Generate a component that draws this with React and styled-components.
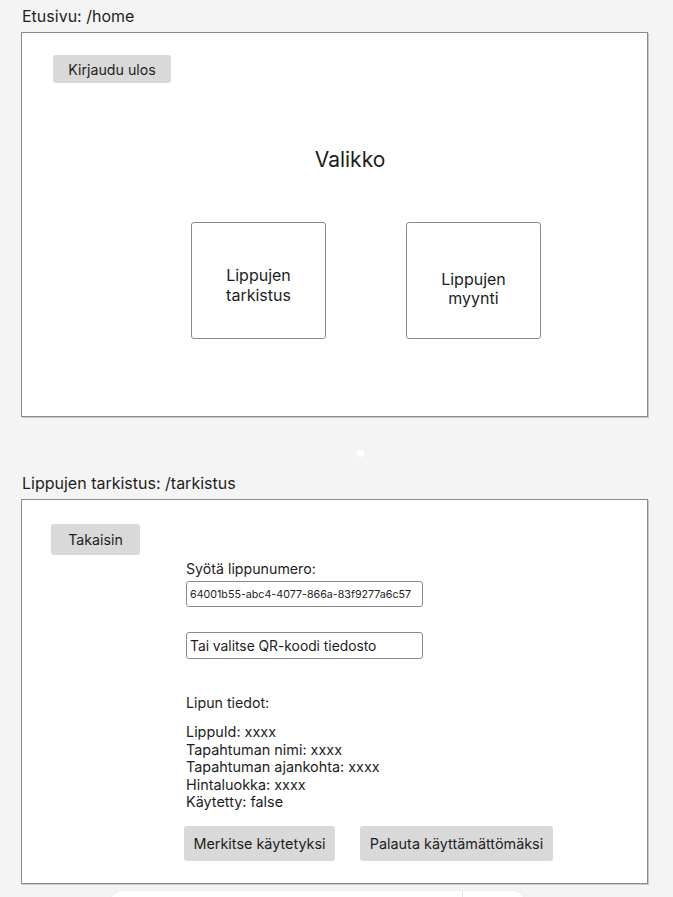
import React from "react";
import styled, { createGlobalStyle } from "styled-components";

const Global = createGlobalStyle`
  html, body { margin: 0; padding: 0; background: #f4f4f4; }
  body { font-family: Inter, "Noto Sans", Arial, sans-serif; color: #1e1e1e; }
  * { box-sizing: border-box; }
`;

const Page = styled.div`
  position: relative;
  width: 673px;
  height: 897px;
  overflow: hidden;
  padding: 6px 0 0 21px;
`;

const SectionTitle = styled.div`
  font-size: 16px;
  line-height: 20px;
  height: 20px;
  margin-left: 1px;
  margin-bottom: 6px;
`;

const Frame = styled.div`
  width: 627px;
  height: 385px;
  background: #fff;
  border: 1px solid #8a8a8a;
  box-shadow: 1px 1px 0 #c9c9c9;
  display: flex;
  flex-direction: column;
  align-items: flex-start;
  padding: ${(p) => p.$pad};
`;

const GreyButton = styled.button`
  font-family: Inter, "Noto Sans", Arial, sans-serif;
  font-size: ${(p) => p.$fs || 14.2}px;
  color: #1e1e1e;
  background: #d9d9d9;
  border: none;
  border-radius: 3px;
  width: ${(p) => p.$w}px;
  height: ${(p) => p.$h}px;
  padding: 0;
  display: flex;
  align-items: center;
  justify-content: center;
`;

const Heading = styled.div`
  align-self: stretch;
  text-align: center;
  font-size: 21px;
  line-height: 24px;
  margin-top: 65px;
`;

const CardRow = styled.div`
  display: flex;
  gap: 80px;
  padding-left: 138px;
  margin-top: 50px;
`;

const Card = styled.div`
  width: 135px;
  height: 117px;
  border: 1px solid #8a8a8a;
  border-radius: 3px;
  display: flex;
  align-items: center;
  justify-content: center;
  text-align: center;
  font-size: 16px;
  line-height: 19.5px;
  padding-top: ${(p) => p.$shift || 0}px;
`;

const DotRow = styled.div`
  height: 56px;
  display: flex;
  align-items: center;
  padding-left: 336px;
  padding-top: 17px;
`;

const Dot = styled.div`
  width: 7px;
  height: 7px;
  border-radius: 50%;
  background: #fff;
`;

const Form = styled.div`
  display: flex;
  flex-direction: column;
  align-items: flex-start;
  margin-left: 135px;
  margin-top: 5px;
`;

const Label = styled.div`
  font-size: 14.2px;
  line-height: 17px;
  margin-top: ${(p) => p.$mt || 0}px;
`;

const Field = styled.div`
  width: 237px;
  height: ${(p) => p.$h}px;
  border: 1px solid #8a8a8a;
  border-radius: 3px;
  display: flex;
  align-items: center;
  padding-left: 3px;
  font-size: ${(p) => p.$fs}px;
  margin-top: ${(p) => p.$mt}px;
  white-space: nowrap;
  overflow: hidden;
`;

const Details = styled.div`
  font-size: 14.4px;
  line-height: 17.6px;
  margin-top: 12px;
`;

const ButtonRow = styled.div`
  display: flex;
  gap: 25px;
  margin-top: 15px;
  margin-left: -2px;
`;

const BottomBar = styled.div`
  position: absolute;
  left: 110px;
  top: 891px;
  width: 415px;
  height: 40px;
  background: #fff;
  border-radius: 12px;
  box-shadow: 0 0 2px rgba(0, 0, 0, 0.08);
  display: flex;
`;

const BarSection = styled.div`
  width: ${(p) => p.$w}px;
  border-right: ${(p) => (p.$divider ? "1px solid #e2e2e2" : "none")};
`;

export default function App() {
  return (
    <>
      <Global />
      <Page>
        <SectionTitle>Etusivu: /home</SectionTitle>
        <Frame $pad="22px 0 0 31px">
          <GreyButton $w={118} $h={28}>Kirjaudu ulos</GreyButton>
          <Heading>Valikko</Heading>
          <CardRow>
            <Card $shift={10}>
              Lippujen
              <br />
              tarkistus
            </Card>
            <Card $shift={17}>
              Lippujen
              <br />
              myynti
            </Card>
          </CardRow>
        </Frame>
        <DotRow>
          <Dot />
        </DotRow>
        <SectionTitle>Lippujen tarkistus: /tarkistus</SectionTitle>
        <Frame $pad="24px 0 0 29px">
          <GreyButton $w={89} $h={31}>Takaisin</GreyButton>
          <Form>
            <Label>Syötä lippunumero:</Label>
            <Field $h={26} $fs={10.7} $mt={4}>
              64001b55-abc4-4077-866a-83f9277a6c57
            </Field>
            <Field $h={27} $fs={13.8} $mt={25}>
              Tai valitse QR-koodi tiedosto
            </Field>
            <Label $mt={35}>Lipun tiedot:</Label>
            <Details>
              LippuId: xxxx
              <br />
              Tapahtuman nimi: xxxx
              <br />
              Tapahtuman ajankohta: xxxx
              <br />
              Hintaluokka: xxxx
              <br />
              Käytetty: false
            </Details>
            <ButtonRow>
              <GreyButton $w={151} $h={35} $fs={14.4}>Merkitse käytetyksi</GreyButton>
              <GreyButton $w={193} $h={35} $fs={14.4}>Palauta käyttämättömäksi</GreyButton>
            </ButtonRow>
          </Form>
        </Frame>
        <BottomBar>
          <BarSection $w={353} $divider />
          <BarSection $w={62} />
        </BottomBar>
      </Page>
    </>
  );
}
